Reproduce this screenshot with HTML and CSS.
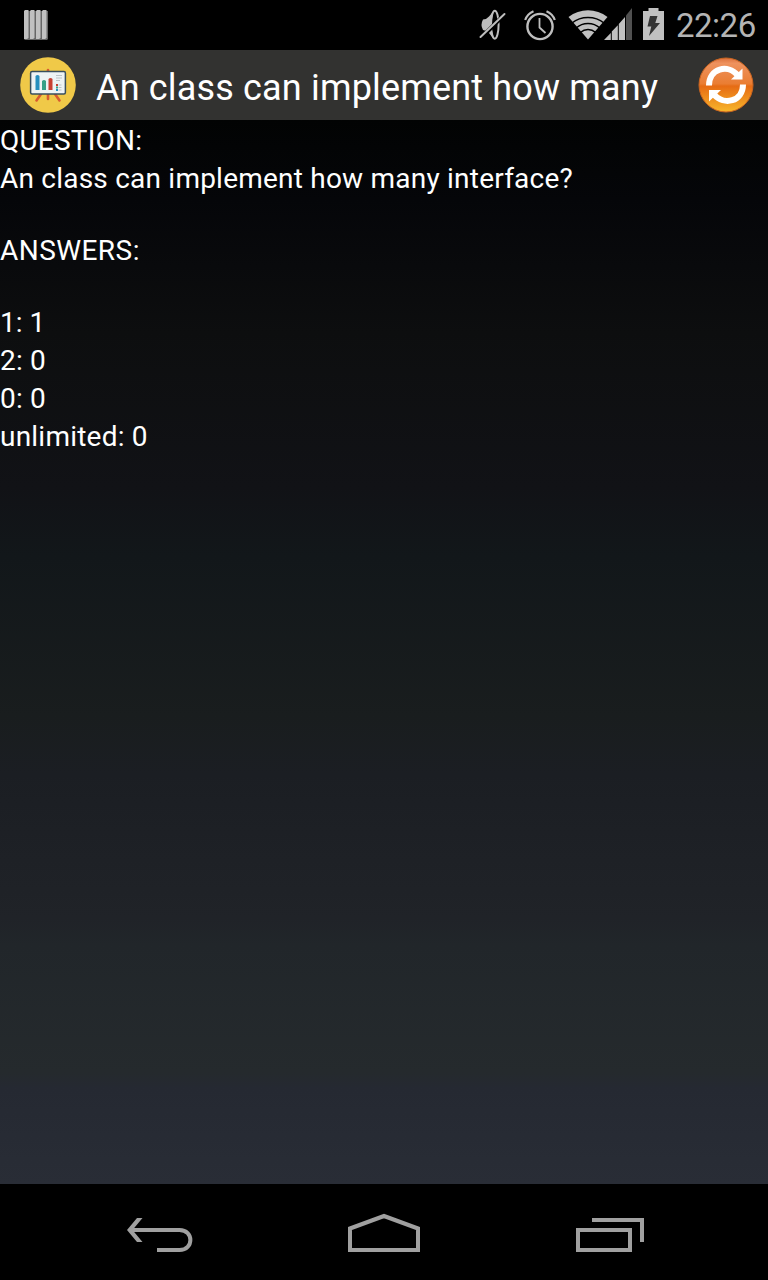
FILE: index.html
```html
<!DOCTYPE html>
<html lang="en">
<head>
<meta charset="utf-8">
<title>Poll results</title>
<link rel="stylesheet" href="styles.css">
</head>
<body>
<div class="screen">
  <div class="status-bar">
    <svg class="bars-icon" width="24" height="30" viewBox="0 0 24 30">
      <path fill="#666" d="M0 1h24v28l-1 1H1l-1-1z"/>
      <path fill="#c0c0c0" d="M0 1l1-1h3.500v28L3 29H0zM6 1l1-1h3.500v28L9 29H6zM12 1l1-1h3.500v28L15 29h-3zM18 1l1-1h3.500v28L21 29h-3z"/>
    </svg>
    <div class="status-icons">
      <svg class="mute" width="28" height="32" viewBox="0 0 28 32">
        <ellipse cx="15.800" cy="15.700" rx="3.800" ry="14" fill="#000" stroke="#bebebe" stroke-width="2"/>
        <path fill="#bebebe" d="M4 10.500q3.500 0 6-3L15 1.500c-3 8-3 21 0 29L10 24q-2.500-2.500-6-3-3-5 0-10.500z"/>
        <path stroke="#000" stroke-width="4" d="M3 28L27 4"/>
        <path stroke="#bebebe" stroke-width="2" stroke-linecap="round" d="M1.500 28L25.500 5"/>
      </svg>
      <svg class="alarm" width="32" height="32" viewBox="0 0 32 32" fill="none" stroke="#bebebe">
        <circle cx="16" cy="17.500" r="12.600" stroke-width="2.400"/>
        <path stroke-width="1.800" d="M15.500 9v9.500l6 5.500"/>
        <path stroke-width="2.200" d="M1.200 11C2.500 7 5.500 4 9.500 2.200M22.500 2.200c4 1.800 7 4.800 8.300 8.800"/>
      </svg>
      <svg class="wifi" width="40" height="30" viewBox="0 0 40 30">
        <path fill="#c0c0c0" d="M.5 7C12-2 28-2 39.500 7L20 29.500z"/>
        <path fill="none" stroke="#000" stroke-width="1.500" d="M4 13c9-7.500 23-7.500 32 0M8 18c7-6 17-6 24 0M12 22.700c5-4 11-4 16 0"/>
      </svg>
      <svg class="signal" width="28" height="32" viewBox="0 0 28 32">
        <path fill="#c0c0c0" d="M0 32l6.800-7v7zM7.800 32v-8.500l6-6.200V32zM14.800 32V16l6.200-7v23z"/>
        <path fill="#505050" d="M22 32V7.500L28 0v32z"/>
      </svg>
      <svg class="battery" width="21" height="32" viewBox="0 0 21 32">
        <path fill="#c0c0c0" d="M5.500 0h10v3H21v29H0V3h5.500z"/>
        <path fill="#333" d="M7 8h7.500l-2.200 7H17L6 28l2.300-9.500H4.500z"/>
      </svg>
      <span class="clock">22:26</span>
    </div>
  </div>
  <div class="title-bar">
    <svg class="app-icon" width="56" height="56" viewBox="0 0 56 56">
      <circle cx="28" cy="28" r="27.800" fill="#f0c948"/>
      <path fill="none" stroke="#d85b30" stroke-width="2.600" stroke-linecap="round" d="M28 13v3M28 36v6M21 37l-4.500 6.500M35 37l4.500 6.500"/>
      <rect x="10.600" y="14.600" width="34.800" height="22.400" rx="1.500" fill="#eef3f4" stroke="#384f5e" stroke-width="1.500"/>
      <path fill="#268fbe" d="M15.500 19q2-2 4 0v14h-4z"/>
      <path fill="#36a087" d="M22 24q2-2 4 0v9h-4z"/>
      <path fill="#c74032" d="M28.500 22q2-2 4 0v11h-4z"/>
      <path stroke="#bbc4c7" stroke-width="1" d="M36 18.500h6M36 21h6M36 23.500h4M38.500 28h3M38.500 30.500h3M38.500 33h3"/>
      <path fill="#c74032" d="M36 27h2v2h-2z"/><path fill="#36a087" d="M36 29.500h2v2h-2z"/><path fill="#268fbe" d="M36 32h2v2h-2z"/>
    </svg>
    <h1 class="title">An class can implement how many</h1>
    <svg class="refresh" width="56" height="56" viewBox="0 0 56 56">
      <defs>
        <linearGradient id="orange" x1="0" y1="0" x2="0" y2="1">
          <stop offset="0" stop-color="#dd713c"/><stop offset=".1" stop-color="#ee925e"/><stop offset=".48" stop-color="#ea7d32"/><stop offset=".52" stop-color="#e66b14"/><stop offset="1" stop-color="#f8b72b"/>
        </linearGradient>
      </defs>
      <circle cx="28" cy="28" r="27" fill="url(#orange)" stroke="#c96420" stroke-width="1"/>
      <path fill="none" stroke="#fff" stroke-width="6" d="M11 28.500C11 11 30 7 39.500 18M45 27.500C45 44.500 26 49 16 37.500"/>
      <path fill="#fff" d="M44.500 11.500V22.500H33zM11 44.500V33H23z"/>
    </svg>
  </div>
  <main class="content">
    <p class="line question">QUESTION:</p>
    <p class="line prompt">An class can implement how many interface?</p>
    <p class="line heading">ANSWERS:</p>
    <p class="line count">1: 1</p>
    <p class="line">2: 0</p>
    <p class="line">0: 0</p>
    <p class="line last">unlimited: 0</p>
  </main>
  <nav class="nav-bar">
    <svg width="72" height="40" viewBox="0 0 72 40" fill="none" stroke="#a0a0a0" stroke-width="4">
      <path d="M6 18h49.500c14.500 0 14.500 20 0 20H33"/>
      <path fill="#a0a0a0" stroke="none" d="M13 6h5.500L8.500 18l10 12H13L3 18z"/>
    </svg>
    <svg width="72" height="40" viewBox="0 0 72 40" fill="none" stroke="#a0a0a0" stroke-width="4">
      <path d="M2 16.500L36 4l34 12.500V38H2z"/>
    </svg>
    <svg width="72" height="40" viewBox="0 0 72 40" fill="none" stroke="#a0a0a0" stroke-width="4">
      <path d="M6 18h52v20H6zM20 8h50v22"/>
    </svg>
  </nav>
</div>
</body>
</html>
```
FILE: styles.css
```css
body {
  margin: 0;
  background: #000;
  font-family: Roboto, sans-serif;
}

.screen {
  display: flex;
  flex-direction: column;
  width: 768px;
  height: 1280px;
  overflow: hidden;
}

svg {
  display: block;
  flex: none;
}

.status-bar {
  display: flex;
  justify-content: space-between;
  height: 50px;
  padding: 0 12px 0 24px;
  box-sizing: border-box;
  background: #000;
}

.bars-icon {
  margin-top: 10px;
}

.status-icons {
  display: flex;
  align-items: flex-start;
}

.mute {
  margin: 9px 17px 0 0;
}

.alarm {
  margin: 9px 12px 0 0;
}

.wifi {
  margin: 10px -4px 0 0;
}

.signal {
  margin: 8px 11px 0 0;
}

.battery {
  margin: 8px 12px 0 0;
}

.clock {
  width: 80px;
  font-size: 33px;
  line-height: 52px;
  letter-spacing: -0.5px;
  font-weight: 400;
  color: #b4b4b4;
  white-space: nowrap;
}

.title-bar {
  display: flex;
  align-items: center;
  height: 70px;
  padding: 0 14px 0 20px;
  box-sizing: border-box;
  background: #323230;
}

.title {
  flex: 1;
  margin: 6px 0 0 20px;
  font-size: 36px;
  font-weight: 400;
  line-height: 44px;
  letter-spacing: 0.17px;
  color: #fff;
  white-space: nowrap;
}

.content {
  flex: 1;
  padding-top: 2px;
  background: linear-gradient(#020303 0%, #050609 7.5%, #0d0e0f 20%, #111216 34.5%, #12171a 41%, #191d1e 56%, #1b1e23 61.5%, #202328 75%, #21262a 77.6%, #252a2d 89.5%, #252932 91%, #292d36 100%);
}

.line {
  margin: 0;
  font-size: 28px;
  line-height: 38px;
  letter-spacing: 0.22px;
  color: #fff;
  white-space: nowrap;
}

.heading {
  margin: 34px 0;
  letter-spacing: 0.45px;
}

.count {
  letter-spacing: 0;
}

.nav-bar {
  display: flex;
  justify-content: center;
  gap: 152px;
  height: 96px;
  padding-top: 28px;
  box-sizing: border-box;
  background: #000;
}
```
